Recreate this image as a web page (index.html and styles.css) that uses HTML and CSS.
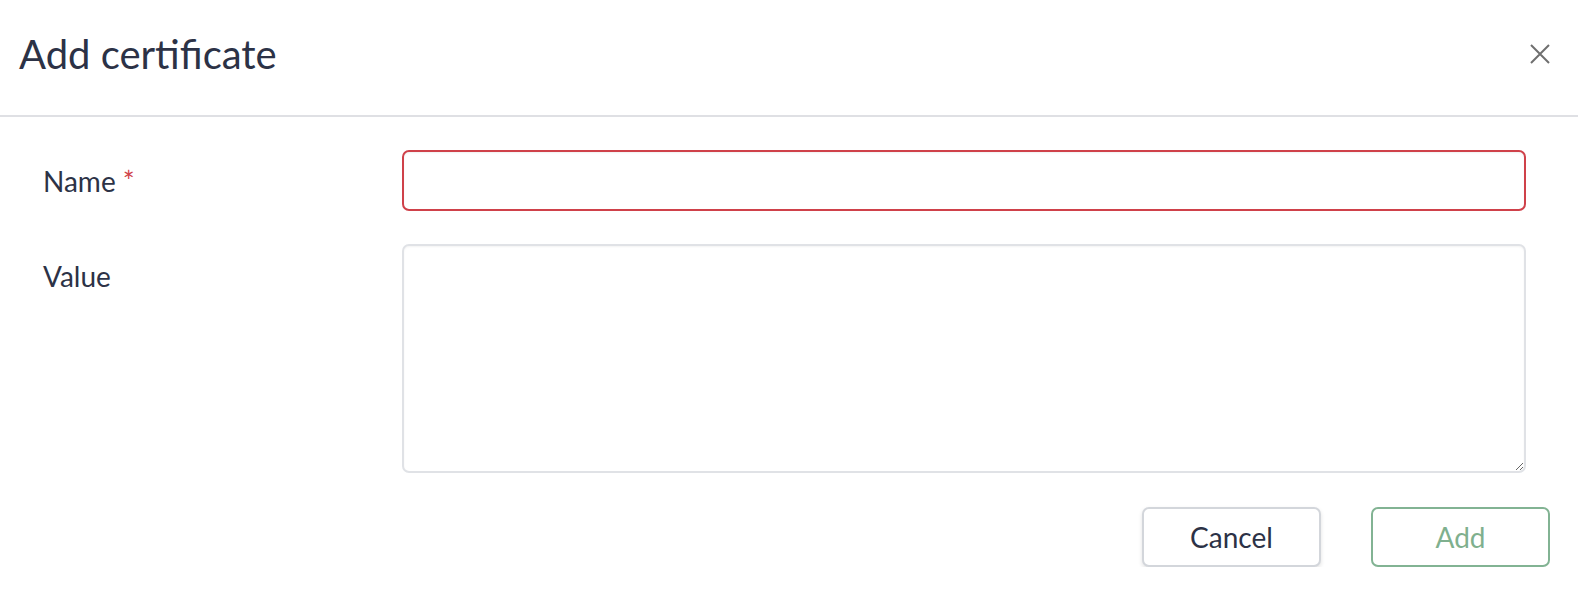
FILE: index.html
```html
<!DOCTYPE html>
<html lang="en">
<head>
<meta charset="utf-8">
<title>Add certificate</title>
<link rel="stylesheet" href="styles.css">
</head>
<body>
<div class="dialog">
  <header class="dialog-header">
    <h1 class="dialog-title">Add certificate</h1>
    <button class="close-btn" type="button" aria-label="Close">
      <svg width="20" height="20" viewBox="0 0 20 20"><path d="M1 1 L19 19 M19 1 L1 19" stroke="#6f6f6f" stroke-width="2" fill="none"/></svg>
    </button>
  </header>
  <form class="dialog-body">
    <div class="form-row row-name">
      <label class="form-label" for="cert-name">Name <span class="req">*</span></label>
      <input id="cert-name" class="form-input invalid" type="text">
    </div>
    <div class="form-row row-value">
      <label class="form-label label-top" for="cert-value">Value</label>
      <textarea id="cert-value" class="form-textarea"></textarea>
    </div>
    <div class="form-actions">
      <button type="button" class="btn btn-cancel">Cancel</button>
      <button type="button" class="btn btn-add">Add</button>
    </div>
  </form>
</div>
</body>
</html>
```

FILE: styles.css
```css
* { box-sizing: border-box; }
html, body { margin: 0; padding: 0; background: #ffffff; }
body {
  font-family: Lato, "Open Sans", sans-serif;
  color: #2c3246;
}
.dialog { width: 1578px; }
.dialog-header {
  height: 117px;
  display: flex;
  align-items: flex-start;
  justify-content: space-between;
  padding: 0 28px 0 19px;
  border-bottom: 2px solid #dfe0e4;
}
.dialog-title {
  margin: 0;
  padding-top: 28px;
  font-size: 40px;
  line-height: 52px;
  font-weight: 400;
  color: #2c3246;
}
.close-btn {
  margin-top: 44px;
  padding: 0;
  border: 0;
  background: transparent;
  width: 20px;
  height: 20px;
  display: flex;
}
.dialog-body {
  padding: 33px 52px 0 43px;
  display: flex;
  flex-direction: column;
}
.form-row {
  display: flex;
  align-items: center;
}
.row-value {
  align-items: flex-start;
  margin-top: 33px;
}
.form-label {
  width: 359px;
  flex: none;
  font-size: 28px;
  line-height: 36px;
  color: #2c3246;
}
.label-top { padding-top: 14px; }
.req { color: #d0434a; }
.form-input {
  flex: 1;
  height: 61px;
  border: 2px solid #cf414a;
  border-radius: 7px;
  outline: none;
  font: inherit;
  font-size: 28px;
  padding: 0 14px;
  box-shadow: inset 0 1px 2px rgba(0,0,0,0.06);
}
.form-textarea {
  flex: 1;
  height: 229px;
  border: 2px solid #e0e2e6;
  border-radius: 7px;
  outline: none;
  font: inherit;
  font-size: 28px;
  padding: 14px;
  resize: vertical;
  box-shadow: inset 0 1px 2px rgba(0,0,0,0.05);
}
.form-actions {
  display: flex;
  justify-content: flex-end;
  gap: 50px;
  margin-top: 34px;
  margin-right: -24px;
}
.btn {
  width: 179px;
  height: 60px;
  border-radius: 7px;
  background: #ffffff;
  font-family: Lato, "Open Sans", sans-serif;
  font-size: 28px;
  cursor: pointer;
}
.btn-cancel {
  border: 2px solid #d3d6db;
  color: #2c3246;
  box-shadow: 0 2px 4px rgba(0,0,0,0.12);
}
.btn-add {
  border: 2px solid #82b393;
  color: #7fb08e;
}
```
